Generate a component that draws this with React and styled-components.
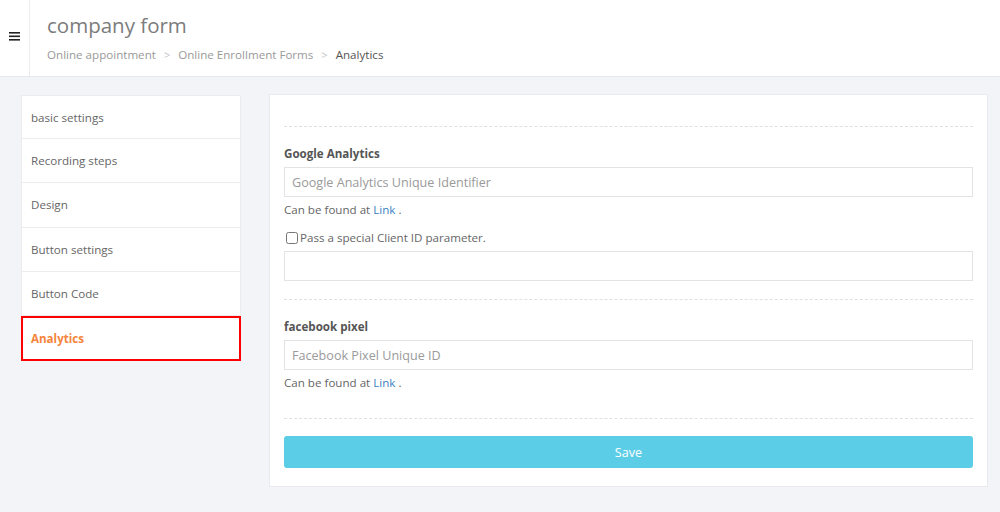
import React from "react";
import styled, { createGlobalStyle } from "styled-components";

const Global = createGlobalStyle`
  html, body { margin: 0; padding: 0; }
  body {
    background: #f3f4f8;
    font-family: "Open Sans", "Noto Sans", sans-serif;
    color: #666;
  }
  * { box-sizing: border-box; }
`;

const Page = styled.div`
  width: 1000px;
  min-height: 512px;
  background: #f3f4f8;
`;

const Header = styled.header`
  display: flex;
  height: 77px;
  background: #fff;
  border-bottom: 1px solid #e6e8ee;
`;

const MenuCell = styled.div`
  width: 30px;
  display: flex;
  align-items: center;
  justify-content: center;
  border-right: 1px solid #ececec;
  padding-bottom: 4px;
`;

const TitleBlock = styled.div`
  padding: 10px 0 0 17px;
  display: flex;
  flex-direction: column;
`;

const Title = styled.h1`
  margin: 0;
  font-size: 20.5px;
  font-weight: 400;
  color: #7c7c7c;
  line-height: 30px;
`;

const Crumbs = styled.div`
  display: flex;
  align-items: center;
  gap: 8px;
  margin-top: 5px;
  font-size: 11.6px;
  line-height: 20px;
`;

const Crumb = styled.span`
  color: ${(p) => (p.$current ? "#555" : "#999")};
`;

const Sep = styled.span`
  color: #c4c4c4;
  font-size: 11px;
`;

const Body = styled.div`
  display: flex;
  align-items: flex-start;
  gap: 28px;
  padding: 17px 12px 0 21px;
`;

const Sidebar = styled.nav`
  width: 220px;
  margin-top: 1px;
  display: flex;
  flex-direction: column;
  background: #fff;
`;

const NavItem = styled.div`
  height: ${(p) => (p.$active ? "45px" : "44.2px")};
  display: flex;
  align-items: center;
  padding-left: ${(p) => (p.$active ? "8px" : "9px")};
  font-size: 11.6px;
  color: ${(p) => (p.$active ? "#f5843c" : "#666")};
  font-weight: ${(p) => (p.$active ? 700 : 400)};
  border: ${(p) => (p.$active ? "2px solid #ff0000" : "1px solid #ececf0")};
  border-top: ${(p) => (p.$active ? "2px solid #ff0000" : "none")};
  &:first-child { border-top: 1px solid #ececf0; }
`;

const Panel = styled.main`
  flex: 1;
  background: #fff;
  border: 1px solid #e8eaf0;
  padding: 31px 14px 18px 14px;
`;

const Section = styled.section`
  border-top: 1px dashed #e0e0e0;
  padding: ${(p) => (p.$pt ?? 17)}px 0 ${(p) => p.$pb}px;
`;

const Label = styled.div`
  font-size: 11.6px;
  font-weight: 700;
  color: #555;
  line-height: 20px;
  margin-bottom: 3px;
`;

const Input = styled.input`
  display: block;
  width: 100%;
  height: 30px;
  border: 1px solid #e3e3e3;
  padding: 0 7px;
  font-family: "Open Sans", "Noto Sans", sans-serif;
  font-size: 12.6px;
  color: #555;
  outline: none;
  margin-top: ${(p) => p.$mt || 0}px;
  &::placeholder { color: #9a9a9a; }
`;

const Help = styled.div`
  font-size: 11.6px;
  line-height: 18px;
  margin-top: 4px;
  color: #666;
`;

const Link = styled.a`
  color: #3b82c4;
  text-decoration: none;
`;

const CheckRow = styled.label`
  display: flex;
  align-items: center;
  gap: 2px;
  margin-top: 10px;
  padding-left: 2px;
  font-size: 11.6px;
  line-height: 18px;
  color: #666;
`;

const Check = styled.input`
  margin: 0;
  width: 12px;
  height: 12px;
`;

const SaveButton = styled.button`
  display: block;
  width: 100%;
  height: 32px;
  margin-top: 17px;
  border: none;
  border-radius: 3px;
  background: #5bcde6;
  color: #fff;
  font-family: "Open Sans", "Noto Sans", sans-serif;
  font-size: 12.6px;
`;

const Hamburger = () => (
  <svg width="11" height="9" viewBox="0 0 11 9">
    <rect x="0" y="0" width="11" height="1.6" fill="#222" />
    <rect x="0" y="3.5" width="11" height="1.6" fill="#222" />
    <rect x="0" y="7" width="11" height="1.6" fill="#222" />
  </svg>
);

const items = [
  "basic settings",
  "Recording steps",
  "Design",
  "Button settings",
  "Button Code",
  "Analytics",
];

export default function App() {
  return (
    <Page>
      <Global />
      <Header>
        <MenuCell>
          <Hamburger />
        </MenuCell>
        <TitleBlock>
          <Title>company form</Title>
          <Crumbs>
            <Crumb>Online appointment</Crumb>
            <Sep>&gt;</Sep>
            <Crumb>Online Enrollment Forms</Crumb>
            <Sep>&gt;</Sep>
            <Crumb $current>Analytics</Crumb>
          </Crumbs>
        </TitleBlock>
      </Header>
      <Body>
        <Sidebar>
          {items.map((t) => (
            <NavItem key={t} $active={t === "Analytics"}>
              {t}
            </NavItem>
          ))}
        </Sidebar>
        <Panel>
          <Section $pb={18}>
            <Label>Google Analytics</Label>
            <Input placeholder="Google Analytics Unique Identifier" />
            <Help>
              Can be found at <Link href="#">Link</Link> .
            </Help>
            <CheckRow>
              <Check type="checkbox" />
              Pass a special Client ID parameter.
            </CheckRow>
            <Input $mt={4} />
          </Section>
          <Section $pb={26}>
            <Label>facebook pixel</Label>
            <Input placeholder="Facebook Pixel Unique ID" />
            <Help>
              Can be found at <Link href="#">Link</Link> .
            </Help>
          </Section>
          <Section $pt={0} $pb={0}>
            <SaveButton>Save</SaveButton>
          </Section>
        </Panel>
      </Body>
    </Page>
  );
}
